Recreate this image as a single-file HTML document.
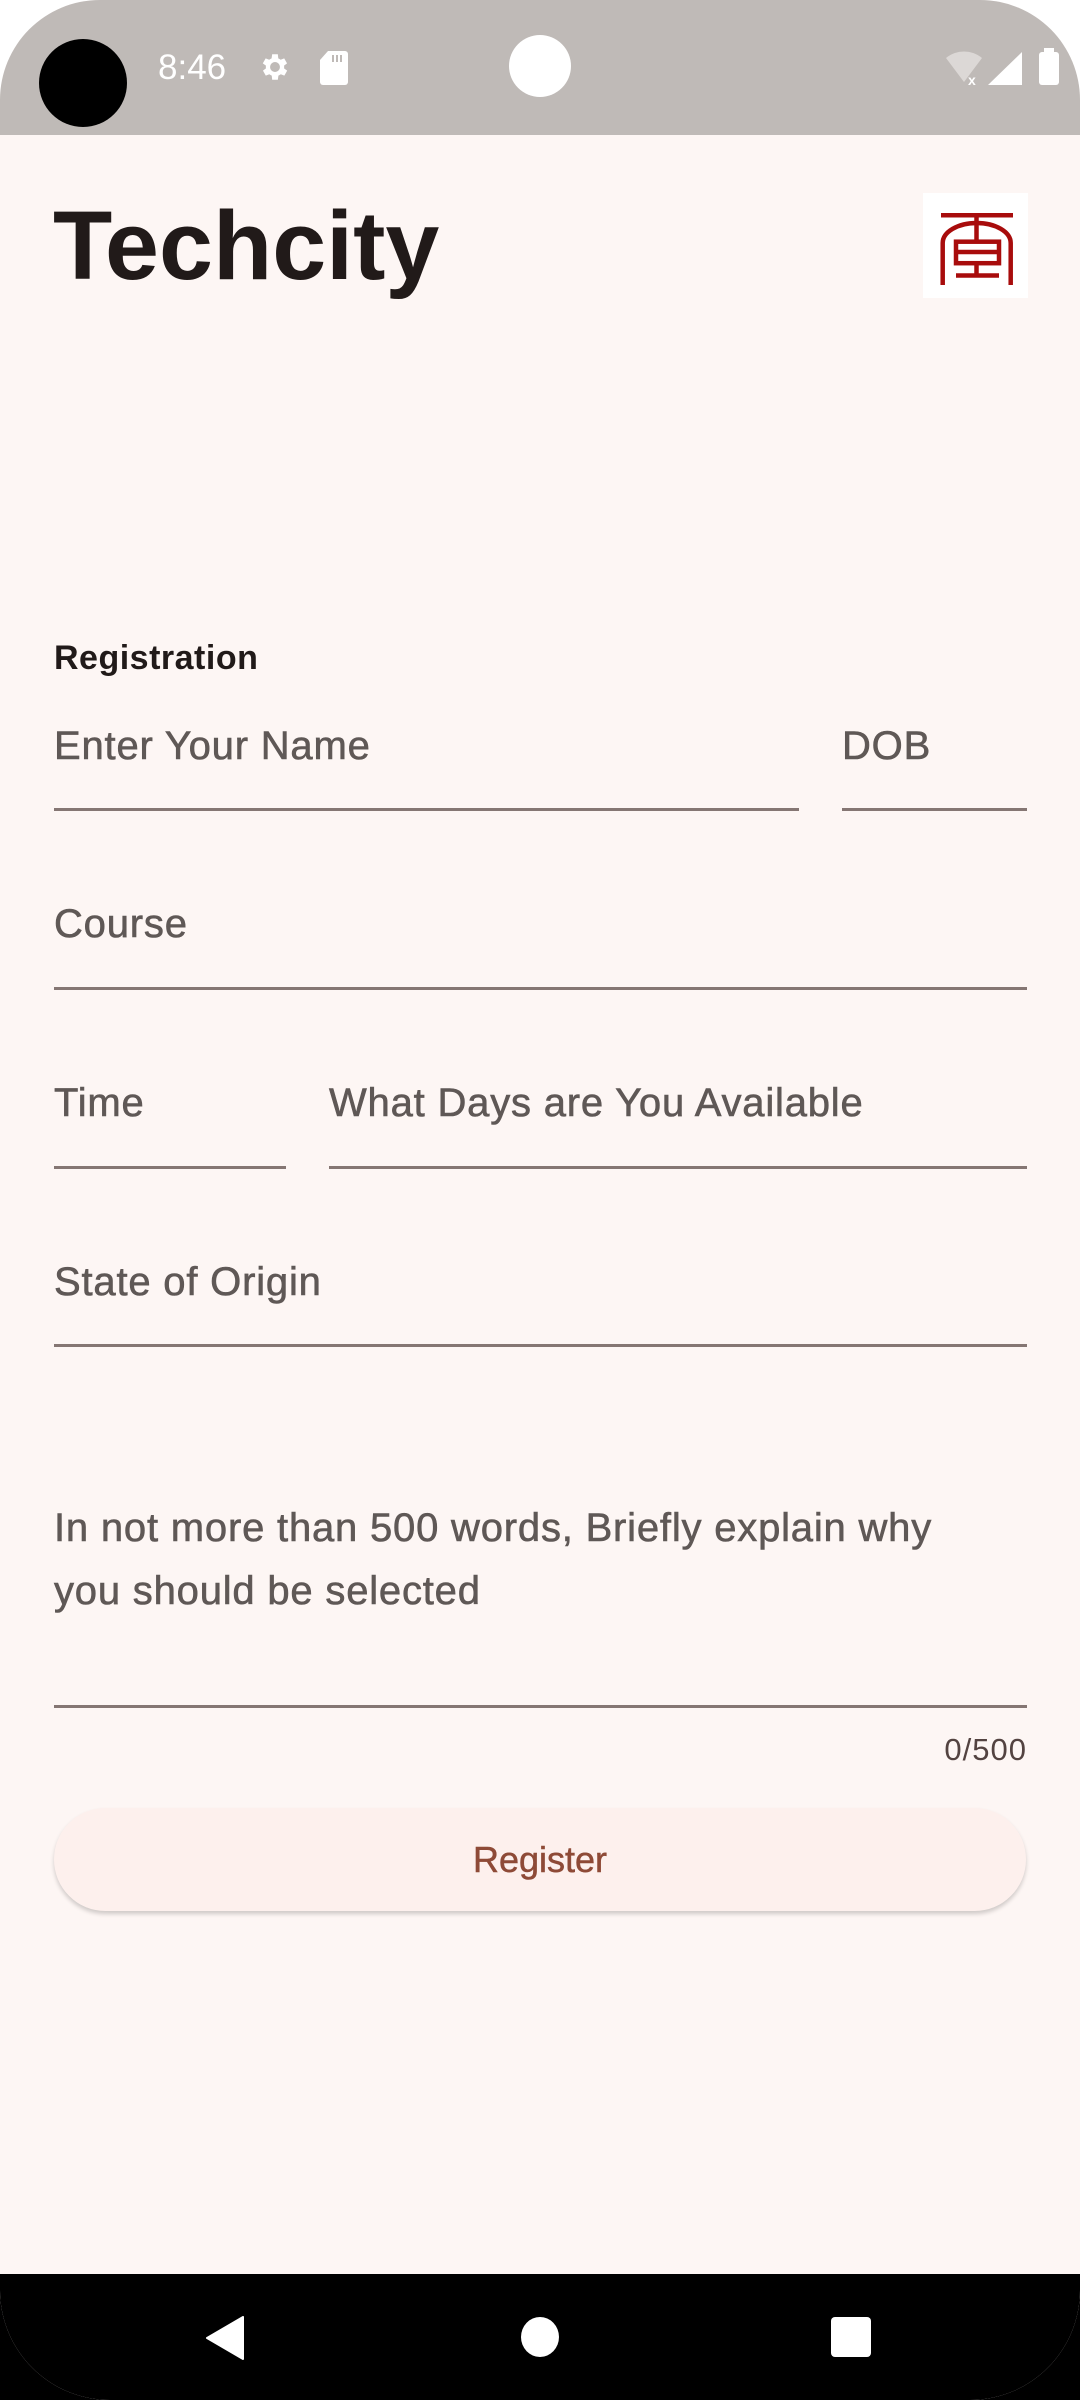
<!DOCTYPE html>
<html><head><meta charset="utf-8">
<style>
html,body{margin:0;padding:0}
body{width:1080px;height:2400px;position:relative;overflow:hidden;background:linear-gradient(#fff 0,#fff 1200px,#000 1200px);font-family:"Liberation Sans",sans-serif}
.screen{position:absolute;left:0;top:0;width:1080px;height:2400px;background:#fdf6f4;border-radius:100px 100px 110px 110px;overflow:hidden}
.status{position:absolute;left:0;top:0;width:1080px;height:135px;background:#bfbab7}
.abs{position:absolute}
.lbl{position:absolute;font-size:40px;color:#5f5856;line-height:1;white-space:nowrap;letter-spacing:0.8px;-webkit-text-stroke:0.6px #5f5856}
.line{position:absolute;height:3px;background:#857673}
.nav{position:absolute;left:0;top:2274px;width:1080px;height:126px;background:#000}
</style></head><body>
<div class="screen">
<div class="status">
  <div class="abs" style="left:39px;top:39px;width:88px;height:88px;border-radius:50%;background:#000"></div>
  <div class="abs" style="left:158px;top:50px;font-size:35px;color:#fff;line-height:1">8:46</div>
  <svg class="abs" style="left:258px;top:50px" width="34" height="34" viewBox="0 0 24 24"><path fill="#fff" d="M19.4 13a7.5 7.5 0 000-2l2.1-1.6-2-3.5-2.5 1a7 7 0 00-1.7-1L15 3h-4l-.4 2.9a7 7 0 00-1.7 1l-2.5-1-2 3.5L6.6 11a7.5 7.5 0 000 2l-2.1 1.6 2 3.5 2.5-1a7 7 0 001.7 1L11 21h4l.4-2.9a7 7 0 001.7-1l2.5 1 2-3.5zM13 15.5a3.5 3.5 0 110-7 3.5 3.5 0 010 7z" transform="translate(-1 0)"/></svg>
  <svg class="abs" style="left:320px;top:51px" width="28" height="34" viewBox="0 0 28 34"><path fill="#fff" d="M8 0h17a3 3 0 013 3v28a3 3 0 01-3 3H3a3 3 0 01-3-3V9z"/><path fill="#bfbab7" d="M12 4h2v7h-2zM16 4h2v7h-2zM20 4h2v7h-2z"/></svg>
  <div class="abs" style="left:509px;top:35px;width:62px;height:62px;border-radius:50%;background:#fff"></div>
  <svg class="abs" style="left:944px;top:50px" width="40" height="36" viewBox="0 0 40 36"><path fill="#dcd8d6" d="M20 32L2 8a28 28 0 0136 0z"/><text x="24" y="35" font-size="14" fill="#fff" font-family="Liberation Sans" font-weight="bold">x</text></svg>
  <svg class="abs" style="left:988px;top:52px" width="34" height="33" viewBox="0 0 34 33"><path fill="#fff" d="M34 0v33H0z"/></svg>
  <div class="abs" style="left:1039px;top:52px;width:20px;height:33px;background:#fff;border-radius:3px"></div>
  <div class="abs" style="left:1044px;top:48px;width:10px;height:5px;background:#fff"></div>
</div>

<div class="abs" style="left:53px;top:197px;font-size:97px;font-weight:bold;color:#211a19;line-height:1;letter-spacing:0px">Techcity</div>
<div class="abs" style="left:923px;top:193px;width:105px;height:105px;background:#fff">
  <svg width="105" height="105" viewBox="0 0 105 105" fill="none" stroke="#a80c0c" stroke-width="4.5">
    <path d="M18 22.3H90"/>
    <path d="M19.7 92V50a34 20 0 0168 0v42"/>
    <path d="M53.5 22.3V48"/>
    <rect x="33" y="48.7" width="43" height="21.5"/>
    <path d="M33 59h43"/>
    <path d="M53.5 70v12.5"/>
    <path d="M33 82.5h43"/>
  </svg>
</div>

<div class="abs" style="left:54px;top:641px;font-size:34px;font-weight:bold;color:#211a19;line-height:1;letter-spacing:0.5px">Registration</div>

<div class="lbl" style="left:54px;top:726px">Enter Your Name</div>
<div class="line" style="left:54px;top:808px;width:745px"></div>
<div class="lbl" style="left:842px;top:726px">DOB</div>
<div class="line" style="left:842px;top:808px;width:185px"></div>

<div class="lbl" style="left:54px;top:904px">Course</div>
<div class="line" style="left:54px;top:987px;width:973px"></div>

<div class="lbl" style="left:54px;top:1083px">Time</div>
<div class="line" style="left:54px;top:1166px;width:232px"></div>
<div class="lbl" style="left:329px;top:1083px">What Days are You Available</div>
<div class="line" style="left:329px;top:1166px;width:698px"></div>

<div class="lbl" style="left:54px;top:1262px">State of Origin</div>
<div class="line" style="left:54px;top:1344px;width:973px"></div>

<div class="lbl" style="left:54px;top:1508px">In not more than 500 words, Briefly explain why</div>
<div class="lbl" style="left:54px;top:1571px">you should be selected</div>
<div class="line" style="left:54px;top:1705px;width:973px"></div>
<div class="abs" style="right:53px;top:1734px;font-size:31px;color:#534341;line-height:1;letter-spacing:1px">0/500</div>

<div class="abs" style="left:54px;top:1808px;width:972px;height:103px;border-radius:52px;background:#fdf0ed;box-shadow:0 3px 4px rgba(0,0,0,0.18);text-align:center;line-height:103px;font-size:36px;color:#8e4a37;-webkit-text-stroke:0.5px #8e4a37">Register</div>

<div class="nav">
  <svg class="abs" style="left:205px;top:42px" width="40" height="44" viewBox="0 0 40 44"><path fill="#fff" d="M38 1v42L2 22z" stroke="#fff" stroke-width="2" stroke-linejoin="round"/></svg>
  <div class="abs" style="left:521px;top:43px;width:38px;height:40px;border-radius:50%;background:#fff"></div>
  <div class="abs" style="left:831px;top:43px;width:40px;height:40px;border-radius:4px;background:#fff"></div>
</div>
</div>
</body></html>
